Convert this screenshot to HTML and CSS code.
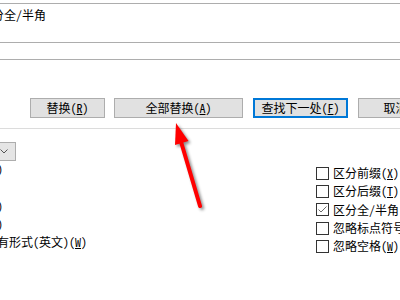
FILE: index.html
```html
<!DOCTYPE html>
<html lang="zh-CN">
<head>
<meta charset="utf-8">
<title>查找和替换</title>
<link rel="stylesheet" href="styles.css">
</head>
<body>
<div class="dialog">
  <div class="find-field"></div>
  <div class="options-line"><span class="options-text">区分全/半角</span></div>
  <div class="replace-field"></div>
  <div class="btn-row">
    <button class="btn btn-replace">替换(<u>R</u>)</button>
    <button class="btn btn-all">全部替换(<u>A</u>)</button>
    <button class="btn btn-next">查找下一处(<u>F</u>)</button>
    <button class="btn btn-cancel">取消</button>
  </div>
  <div class="divider"></div>
  <div class="search-opts">
    <div class="left-col">
      <div class="select">
        <svg class="chev" width="8" height="5" viewBox="0 0 8 5"><path d="M0.5 0.5 L4 4 L7.5 0.5" fill="none" stroke="#555" stroke-width="1"/></svg>
      </div>
      <div class="left-rows">
        <div class="row">区分大小写(<u>H</u>)</div>
        <div class="row">全字匹配(<u>Y</u>)</div>
        <div class="row">使用通配符(<u>U</u>)</div>
        <div class="row">同音(英文)(<u>K</u>)</div>
        <div class="row">查找单词的所有形式(英文)(<u>W</u>)</div>
      </div>
    </div>
    <div class="right-col">
      <label class="chk-row"><span class="box"></span><span>区分前缀(<u>X</u>)</span></label>
      <label class="chk-row"><span class="box"></span><span>区分后缀(<u>T</u>)</span></label>
      <label class="chk-row"><span class="box"><svg width="11" height="11" viewBox="0 0 11 11"><path d="M1.5 5.5 L4 8 L9.5 2.5" fill="none" stroke="#6b6b6b" stroke-width="1"/></svg></span><span>区分全/半角</span></label>
      <label class="chk-row"><span class="box"></span><span>忽略标点符号(<u>S</u>)</span></label>
      <label class="chk-row"><span class="box"></span><span>忽略空格(<u>W</u>)</span></label>
    </div>
  </div>
</div>
<svg class="arrow" width="400" height="300" viewBox="0 0 400 300">
  <line x1="180.5" y1="140" x2="200" y2="206" stroke="#ff0000" stroke-width="4" stroke-linecap="round"/>
  <polygon points="176,123 188.5,141 175,145" fill="#ff0000"/>
</svg>
</body>
</html>
```
FILE: styles.css
```css
* { box-sizing: border-box; }
html, body {
  margin: 0;
  padding: 0;
  width: 400px;
  height: 300px;
  overflow: hidden;
  background: #ffffff;
}
body {
  position: relative;
  font-family: "Noto Sans Mono CJK SC", "Noto Sans CJK SC", sans-serif;
  font-size: 12px;
  line-height: 12px;
  color: #000;
}
.dialog {
  width: 400px;
  height: 300px;
  display: flex;
  flex-direction: column;
}
.find-field {
  height: 4px;
  flex: none;
  border-bottom: 1px solid #adadad;
}
.options-line {
  height: 38px;
  flex: none;
  padding-top: 5px;
  white-space: nowrap;
}
.options-text {
  margin-left: -20px;
}
.replace-field {
  height: 18px;
  flex: none;
  border-top: 1px solid #adadad;
  border-bottom: 1px solid #adadad;
}
.btn-row {
  margin-top: 38px;
  display: flex;
  gap: 10px;
  padding-left: 30px;
  flex: none;
  white-space: nowrap;
}
.btn {
  height: 20px;
  flex: none;
  font: inherit;
  color: #000;
  background: #e1e1e1;
  border: 1px solid #adadad;
  padding: 0;
  margin: 0;
  text-align: center;
}
.btn-replace { width: 75px; }
.btn-all { width: 129px; margin-left: -1px; }
.btn-next { width: 95px; border: 2px solid #0078d7; }
.btn-cancel { width: 75px; }
.divider {
  margin-top: 10px;
  height: 1px;
  background: #dcdcdc;
  flex: none;
}
.search-opts {
  margin-top: 13px;
  display: grid;
  grid-template-columns: 316px 1fr;
  flex: none;
}
.left-col {
  white-space: nowrap;
}
.select {
  width: 60px;
  height: 19px;
  margin-left: -44px;
  background: #e5e5e5;
  border: 1px solid #adadad;
  display: flex;
  align-items: center;
  justify-content: flex-end;
  padding-right: 7px;
}
.chev { display: block; }
.left-rows {
  margin-left: -75px;
  margin-top: -1px;
}
.row {
  height: 18.33px;
  display: flex;
  align-items: center;
}
.right-col {
  padding-top: 22px;
  white-space: nowrap;
}
.chk-row {
  height: 18.33px;
  display: flex;
  align-items: center;
  gap: 4px;
}
.box {
  width: 13px;
  height: 13px;
  flex: none;
  border: 1px solid #333;
  background: #fff;
  display: flex;
  align-items: center;
  justify-content: center;
}
.box svg { display: block; }
.arrow {
  position: absolute;
  left: 0;
  top: 0;
  pointer-events: none;
  filter: drop-shadow(2px 2px 1.5px rgba(0, 0, 0, 0.45));
}
```
